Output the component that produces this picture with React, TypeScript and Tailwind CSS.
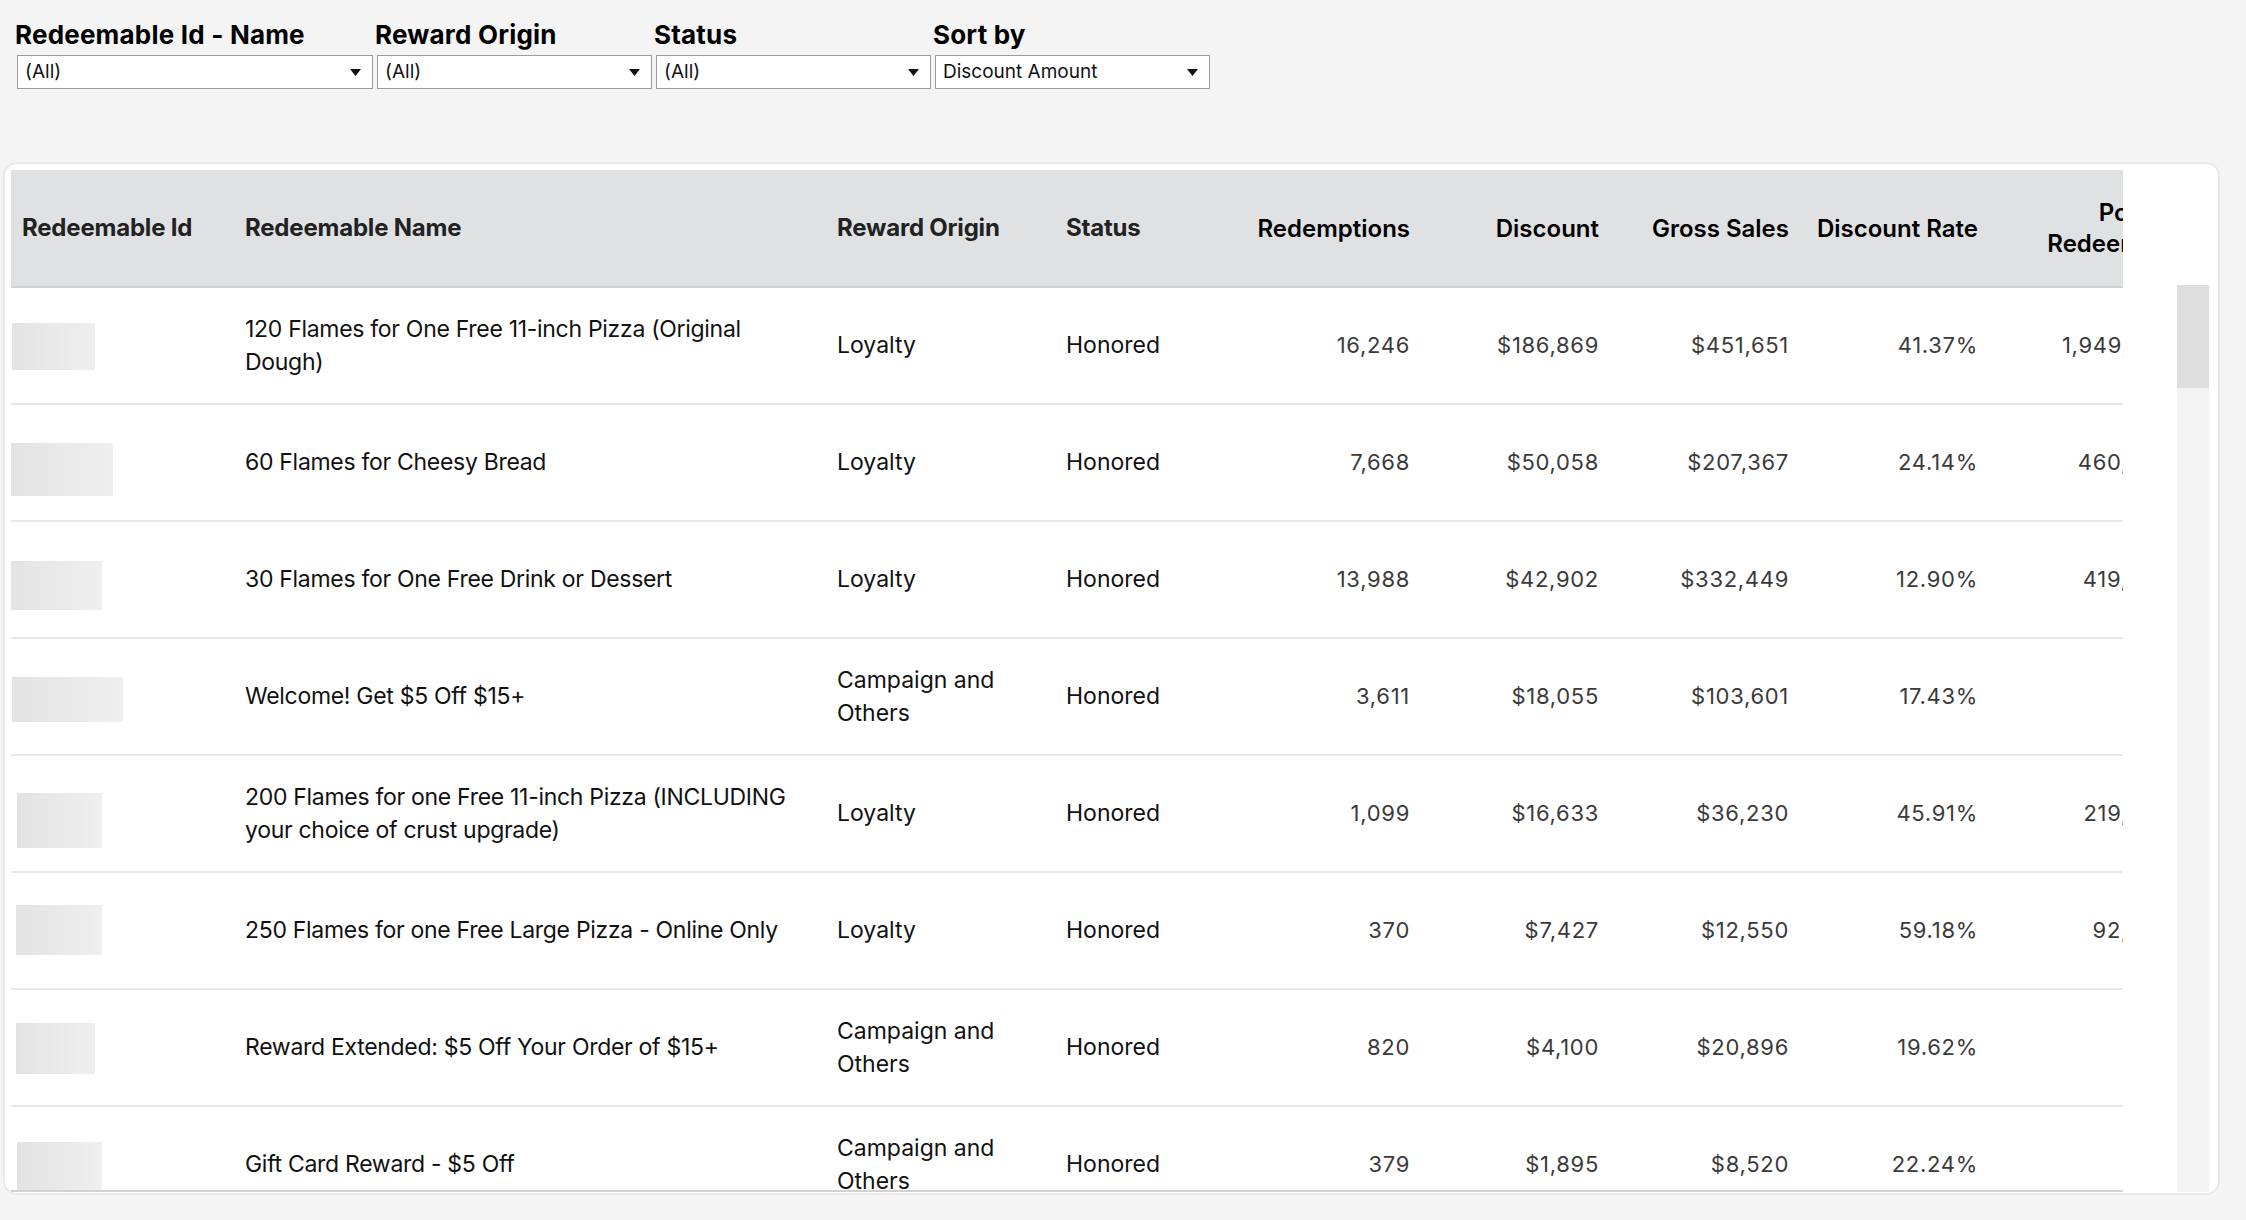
import React from 'react';

interface Row {
    name: string;
    origin: string;
    status: string;
    redemptions: string;
    discount: string;
    gross: string;
    rate: string;
    points: string;
    // placeholder block for the hidden id
    idBox: string;
}

const rows: Row[] = [
    { name: '120 Flames for One Free 11-inch Pizza (Original Dough)', origin: 'Loyalty', status: 'Honored', redemptions: '16,246', discount: '$186,869', gross: '$451,651', rate: '41.37%', points: '1,949,520', idBox: 'ml-[1px] mt-[35px] w-[83px] h-[47px]' },
    { name: '60 Flames for Cheesy Bread', origin: 'Loyalty', status: 'Honored', redemptions: '7,668', discount: '$50,058', gross: '$207,367', rate: '24.14%', points: '460,080', idBox: 'ml-0 mt-[38px] w-[102px] h-[53px]' },
    { name: '30 Flames for One Free Drink or Dessert', origin: 'Loyalty', status: 'Honored', redemptions: '13,988', discount: '$42,902', gross: '$332,449', rate: '12.90%', points: '419,640', idBox: 'ml-0 mt-[39px] w-[91px] h-[49px]' },
    { name: 'Welcome! Get $5 Off $15+', origin: 'Campaign and Others', status: 'Honored', redemptions: '3,611', discount: '$18,055', gross: '$103,601', rate: '17.43%', points: '', idBox: 'ml-[1px] mt-[38px] w-[111px] h-[45px]' },
    { name: '200 Flames for one Free 11-inch Pizza (INCLUDING your choice of crust upgrade)', origin: 'Loyalty', status: 'Honored', redemptions: '1,099', discount: '$16,633', gross: '$36,230', rate: '45.91%', points: '219,800', idBox: 'ml-[6px] mt-[37px] w-[85px] h-[55px]' },
    { name: '250 Flames for one Free Large Pizza - Online Only', origin: 'Loyalty', status: 'Honored', redemptions: '370', discount: '$7,427', gross: '$12,550', rate: '59.18%', points: '92,500', idBox: 'ml-[5px] mt-[32px] w-[86px] h-[50px]' },
    { name: 'Reward Extended: $5 Off Your Order of $15+', origin: 'Campaign and Others', status: 'Honored', redemptions: '820', discount: '$4,100', gross: '$20,896', rate: '19.62%', points: '', idBox: 'ml-[5px] mt-[33px] w-[79px] h-[51px]' },
    { name: 'Gift Card Reward - $5 Off', origin: 'Campaign and Others', status: 'Honored', redemptions: '379', discount: '$1,895', gross: '$8,520', rate: '22.24%', points: '', idBox: 'ml-[6px] mt-[35px] w-[85px] h-[51px]' },
];

const cols = 'grid grid-cols-[224px_592px_229px_174px_190px_189px_190px_189px_187px] w-[2164px] shrink-0';

const Filter: React.FC<{ label: string; value: string; width: string }> = ({ label, value, width }) => (
    <div className={`flex flex-col ${width}`}>
        <span className="-ml-[2px] whitespace-nowrap text-[26px] leading-[30px] font-bold text-black tracking-[0.2px]">{label}</span>
        <div className="mt-[5px] h-[34px] flex items-center justify-between border border-[#9c9c9c] bg-white pl-[7px] pr-[11px]">
            <span className="text-[19px] text-[#111]">{value}</span>
            <svg width="11" height="7" viewBox="0 0 11 7"><path d="M0 0h11L5.5 7z" fill="#111" /></svg>
        </div>
    </div>
);

const HeadL: React.FC<{ text: string; pad?: string }> = ({ text, pad = 'pl-[10px]' }) => (
    <div className={`flex items-center ${pad} text-[24px] font-bold text-[#222] tracking-[-0.2px]`}>{text}</div>
);

const HeadR: React.FC<{ children: React.ReactNode; pad?: string }> = ({ children, pad = 'pr-[10px]' }) => (
    <div className={`flex items-center justify-end ${pad} text-right text-[24px] leading-[31px] font-semibold text-black`}>{children}</div>
);

const Num: React.FC<{ v: string; pad?: string }> = ({ v, pad = 'pr-[10px]' }) => (
    <div className={`flex items-center justify-end ${pad} text-[22px] text-[#3a3a3a] tracking-[0.7px]`}>{v}</div>
);

const App: React.FC = () => {
    return (
        <div className="min-h-screen w-full bg-[#f4f4f4] font-['Inter',sans-serif] text-black">
            <div className="flex gap-1 pl-[17px] pt-[20px]">
                <Filter label="Redeemable Id - Name" value="(All)" width="w-[356px]" />
                <Filter label="Reward Origin" value="(All)" width="w-[275px]" />
                <Filter label="Status" value="(All)" width="w-[275px]" />
                <Filter label="Sort by" value="Discount Amount" width="w-[275px]" />
            </div>

            <div className="ml-[3px] mt-[73px] w-[2217px] h-[1033px] rounded-[14px] border-2 border-[#e9e9e9] bg-white pt-[6px] pl-[6px] flex">
                <div className="w-[2112px] h-[1022px] overflow-hidden flex flex-col border-b-2 border-[#d2d2d2]">
                    <div className={`${cols} h-[118px] bg-[#e0e1e3] border-b-2 border-[#d0d1d3]`}>
                        <HeadL text="Redeemable Id" pad="pl-[11px]" />
                        <HeadL text="Redeemable Name" />
                        <HeadL text="Reward Origin" />
                        <HeadL text="Status" />
                        <HeadR>Redemptions</HeadR>
                        <HeadR>Discount</HeadR>
                        <HeadR>Gross Sales</HeadR>
                        <HeadR>Discount Rate</HeadR>
                        <HeadR pad="pr-[4px]">Points<br />Redeemed</HeadR>
                    </div>
                    {rows.map((r, i) => (
                        <div key={i} className={`${cols} h-[117px] border-b-2 border-[#e7e7e7]`}>
                            <div className="flex items-start">
                                <div className={`${r.idBox} bg-gradient-to-r from-[#e3e3e3] to-[#efefef]`} />
                            </div>
                            <div className="flex items-center pl-[10px] pr-[22px] text-[23px] leading-[33px] text-[#111] tracking-[-0.3px]">{r.name}</div>
                            <div className="flex items-center pl-[10px] pr-[20px] text-[23px] leading-[33px] text-[#111]">{r.origin}</div>
                            <div className="flex items-center pl-[10px] text-[23px] text-[#111]">{r.status}</div>
                            <Num v={r.redemptions} />
                            <Num v={r.discount} />
                            <Num v={r.gross} />
                            <Num v={r.rate} />
                            <Num v={r.points} pad="pr-[4px]" />
                        </div>
                    ))}
                </div>
                <div className="ml-[54px] mt-[115px] w-[32px] h-[907px] bg-[#f3f3f3] flex flex-col">
                    <div className="h-[103px] bg-[#dedede]" />
                </div>
            </div>
        </div>
    );
};

export default App;
